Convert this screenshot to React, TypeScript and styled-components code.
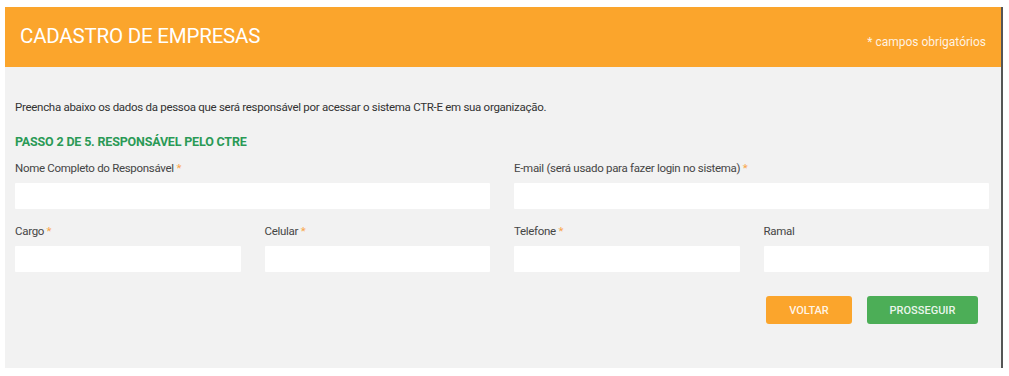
import React from "react";
import styled, { createGlobalStyle } from "styled-components";

const GlobalStyle = createGlobalStyle`
  html, body { margin: 0; padding: 0; background: #ffffff; }
  body { font-family: Roboto, "Liberation Sans", Arial, sans-serif; }
  * { box-sizing: border-box; }
`;

const Page = styled.div`
  padding: 7px 0 0 5px;
`;

const Panel = styled.section`
  width: 998px;
  height: 361px;
  background: #f2f2f2;
  border-right: 2px solid #555555;
`;

const Header = styled.header`
  height: 60px;
  background: #fba52c;
  display: flex;
  align-items: center;
  justify-content: space-between;
  padding: 0 15px 0 15px;
`;

const Title = styled.h1`
  margin: 0 0 2px 0;
  font-family: Roboto, "Liberation Sans", sans-serif;
  font-weight: 400;
  font-size: 20.5px;
  line-height: 24px;
  color: #ffffff;
  letter-spacing: -0.2px;
`;

const Required = styled.span`
  margin-top: 10px;
  font-family: Roboto, "Liberation Sans", sans-serif;
  font-size: 12px;
  letter-spacing: 0px;
  color: rgba(255, 255, 255, 0.88);
`;

const Body = styled.div`
  padding: 33px 12px 0 10px;
  display: flex;
  flex-direction: column;
`;

const Intro = styled.p`
  margin: 0;
  font-size: 11.5px;
  line-height: 14px;
  color: #333333;
  letter-spacing: -0.29px;
`;

const StepTitle = styled.h2`
  margin: 21px 0 0 0;
  font-size: 12.5px;
  line-height: 14px;
  font-weight: 700;
  color: #2a9a56;
  letter-spacing: -0.18px;
`;

const Grid = styled.div<{ $cols: number; $top: number }>`
  display: grid;
  grid-template-columns: repeat(${(p) => p.$cols}, 1fr);
  column-gap: 24px;
  margin-top: ${(p) => p.$top}px;
`;

const Field = styled.div`
  display: flex;
  flex-direction: column;
  gap: 8px;
`;

const Label = styled.label`
  font-size: 11.5px;
  line-height: 14px;
  color: #454545;
  letter-spacing: -0.3px;
`;

const Star = styled.span`
  color: #f9a64a;
`;

const Input = styled.input`
  height: 26px;
  border: none;
  background: #ffffff;
  border-radius: 1px;
  outline: none;
  padding: 0 8px;
`;

const Actions = styled.div`
  display: flex;
  justify-content: flex-end;
  gap: 15px;
  margin-top: 24px;
  padding-right: 11px;
`;

const Button = styled.button<{ $color: string; $width: number }>`
  width: ${(p) => p.$width}px;
  height: 28px;
  border: none;
  border-radius: 3px;
  background: ${(p) => p.$color};
  color: rgba(255, 255, 255, 0.9);
  font-family: Roboto, "Liberation Sans", sans-serif;
  font-weight: 500;
  font-size: 11px;
  letter-spacing: 0px;
  cursor: pointer;
`;

const FieldItem = ({ label, required }: { label: string; required?: boolean }) => (
  <Field>
    <Label>
      {label}
      {required && <Star> *</Star>}
    </Label>
    <Input type="text" />
  </Field>
);

export default function App() {
  return (
    <>
      <GlobalStyle />
      <Page>
        <Panel>
          <Header>
            <Title>CADASTRO DE EMPRESAS</Title>
            <Required>* campos obrigatórios</Required>
          </Header>
          <Body>
            <Intro>
              Preencha abaixo os dados da pessoa que será responsável por acessar o sistema CTR-E em sua organização.
            </Intro>
            <StepTitle>PASSO 2 DE 5. RESPONSÁVEL PELO CTRE</StepTitle>
            <Grid $cols={2} $top={12}>
              <FieldItem label="Nome Completo do Responsável" required />
              <FieldItem label="E-mail (será usado para fazer login no sistema)" required />
            </Grid>
            <Grid $cols={4} $top={15}>
              <FieldItem label="Cargo" required />
              <FieldItem label="Celular" required />
              <FieldItem label="Telefone" required />
              <FieldItem label="Ramal" />
            </Grid>
            <Actions>
              <Button $color="#fba52c" $width={86}>VOLTAR</Button>
              <Button $color="#4cae57" $width={111}>PROSSEGUIR</Button>
            </Actions>
          </Body>
        </Panel>
      </Page>
    </>
  );
}
